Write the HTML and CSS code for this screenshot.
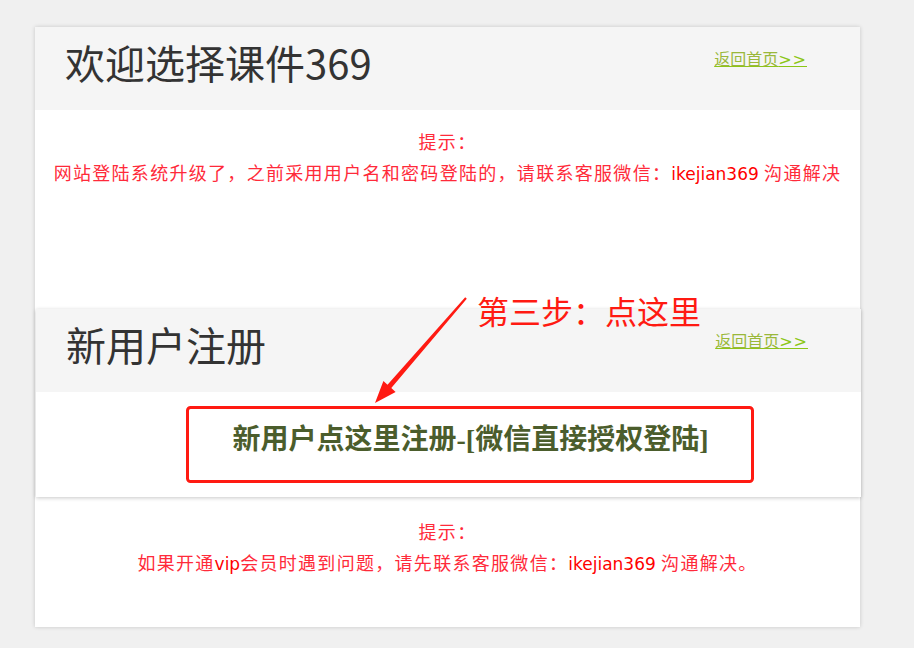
FILE: index.html
```html
<!DOCTYPE html>
<html lang="zh-CN">
  <head>
    <meta charset="UTF-8" />
    <meta name="viewport" content="width=device-width, initial-scale=1.0" />
    <title>欢迎选择课件369</title>
    <link rel="stylesheet" href="styles.css">
  </head>
  <body>
    <div class="card">
      <div class="card-head">
        <h1>欢迎选择课件369</h1>
        <a class="back" href="#">返回首页<span>&gt;&gt;</span></a>
      </div>

      <div class="tips tips-top">
        <p>提示：</p>
        <p>网站登陆系统升级了，之前采用用户名和密码登陆的，请联系客服微信：<span class="wx">ikejian369</span> 沟通解决</p>
      </div>

      <div class="register">
        <div class="card-head">
          <h1>新用户注册</h1>
          <a class="back" href="#">返回首页<span>&gt;&gt;</span></a>
        </div>
        <div class="register-body">
          <a class="reg-link" href="#">新用户点这里注册-[微信直接授权登陆]</a>
        </div>
      </div>

      <div class="tips tips-bottom">
        <p>提示：</p>
        <p>如果开通<span class="wx">vip</span>会员时遇到问题，请先联系客服微信：<span class="wx">ikejian369</span> 沟通解决。</p>
      </div>
    </div>

    <!-- annotation drawn over the screenshot -->
    <svg class="mark" width="914" height="648" viewBox="0 0 914 648">
      <rect x="187.5" y="407.5" width="565" height="74" rx="3" fill="none" stroke="#ff1a12" stroke-width="3" />
      <polygon points="466.8,298.7 391.3,388 395.6,392 375,403 383.4,381 387.5,384.8 465.2,297.3" fill="#ff1a12" />
    </svg>
    <div class="mark-text">第三步：点这里</div>
  </body>
</html>
```

FILE: styles.css
```css
body {
  margin: 0;
  background: #f0f0f0;
  font-family: "Noto Sans CJK SC", "Liberation Sans", sans-serif;
  position: relative;
  min-height: 648px;
}
.card {
  width: 825px;
  margin: 27px 0 0 35px;
  background: #fff;
  box-shadow: 0 0 4px rgba(0, 0, 0, 0.18);
}
.card-head {
  height: 83px;
  box-sizing: border-box;
  background: #f5f5f5;
  display: flex;
  justify-content: space-between;
  align-items: flex-start;
  padding: 0 53px 0 30px;
}
.card-head h1 {
  margin: 11px 0 0;
  font-size: 40px;
  line-height: 48px;
  font-weight: normal;
  color: #333;
}
.back {
  margin-top: 20px;
  font-size: 16px;
  line-height: 22px;
  color: #9ab83a;
  text-decoration: underline;
  text-decoration-color: #8cc616;
}
.back span {
  color: #8cc616;
  font-family: "DejaVu Sans", sans-serif;
  letter-spacing: 1px;
}
.tips {
  box-sizing: border-box;
  text-align: center;
  color: #ff2a3a;
  font-size: 18px;
  line-height: 31px;
  letter-spacing: 1.3px;
}
.tips p {
  margin: 0;
}
.tips .wx {
  color: #ff0000;
  font-family: "DejaVu Sans", sans-serif;
  font-size: 17px;
  letter-spacing: 0;
}
.tips-top {
  height: 199px;
  padding-top: 16px;
}
.tips-bottom {
  height: 130px;
  padding-top: 19px;
}
.register {
  margin: 0 -1px 0 1px;
  background: #fff;
  box-shadow: 0 1px 4px rgba(0, 0, 0, 0.22);
  position: relative;
}
.register-body {
  height: 105px;
  box-sizing: border-box;
  padding: 25px 0 0 44px;
  text-align: center;
}
.reg-link {
  font-family: "Liberation Serif", "Noto Sans CJK SC", serif;
  font-size: 28px;
  font-weight: bold;
  color: #4b5d2c;
  text-decoration: none;
}
.mark {
  position: absolute;
  left: 0;
  top: 0;
  pointer-events: none;
}
.mark-text {
  position: absolute;
  left: 477px;
  top: 294px;
  font-size: 32px;
  line-height: 32px;
  color: #ff1a12;
}
```
